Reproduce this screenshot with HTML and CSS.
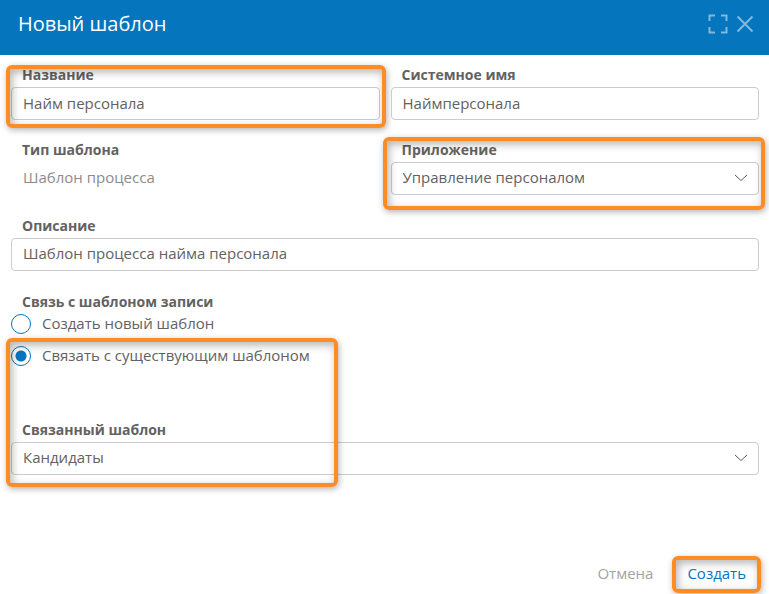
FILE: index.html
```html
<!DOCTYPE html>
<html lang="ru">
<head>
<meta charset="utf-8">
<title>Новый шаблон</title>
<link rel="stylesheet" href="styles.css">
</head>
<body>
<form class="dialog">
  <header class="dialog-header">
    <h1 class="dialog-title">Новый шаблон</h1>
    <button class="icon-button" type="button" aria-label="Развернуть">
      <svg width="20" height="20" viewBox="0 0 20 20"><path d="M1.500 7V1.500H7M13 1.500H18.500V7M18.500 13V18.500H13M7 18.500H1.500V13"/></svg>
    </button>
    <button class="icon-button" type="button" aria-label="Закрыть">
      <svg width="18" height="18" viewBox="0 0 18 18"><path d="M1.500 1.500L16.500 16.500M16.500 1.500L1.500 16.500"/></svg>
    </button>
  </header>

  <main class="dialog-body">
    <div class="field-grid">
      <div class="field">
        <label class="label" for="name">Название</label>
        <input class="control" id="name" type="text" value="Найм персонала">
        <span class="callout callout-name"></span>
      </div>
      <div class="field">
        <label class="label" for="system-name">Системное имя</label>
        <input class="control" id="system-name" type="text" value="Наймперсонала">
      </div>
      <div class="field">
        <span class="label">Тип шаблона</span>
        <span class="static-value">Шаблон процесса</span>
      </div>
      <div class="field">
        <label class="label" for="app">Приложение</label>
        <div class="select-box">
          <select class="control" id="app"><option>Управление персоналом</option></select>
          <svg class="chevron" width="14" height="8" viewBox="0 0 14 8"><path d="M1 1L7 6.500L13 1"/></svg>
        </div>
        <span class="callout callout-app"></span>
      </div>
    </div>

    <div class="field">
      <label class="label" for="description">Описание</label>
      <input class="control control-raised" id="description" type="text" value="Шаблон процесса найма персонала">
    </div>

    <div class="record-link">
      <div class="radio-group" role="radiogroup" aria-labelledby="link-label">
        <span class="label" id="link-label">Связь с шаблоном записи</span>
        <label class="radio-option"><input class="radio" type="radio" name="link">Создать новый шаблон</label>
        <label class="radio-option"><input class="radio" type="radio" name="link" checked>Связать с существующим шаблоном</label>
      </div>
      <div class="field">
        <label class="label" for="linked">Связанный шаблон</label>
        <div class="select-box">
          <select class="control" id="linked"><option>Кандидаты</option></select>
          <svg class="chevron" width="14" height="8" viewBox="0 0 14 8"><path d="M1 1L7 6.500L13 1"/></svg>
        </div>
      </div>
      <span class="callout callout-link"></span>
    </div>
  </main>

  <footer class="dialog-footer">
    <button class="action" type="button">Отмена</button>
    <div class="primary-slot">
      <button class="action action-primary" type="submit">Создать</button>
      <span class="callout callout-create"></span>
    </div>
  </footer>
</form>
</body>
</html>
```
FILE: styles.css
```css
* {
  box-sizing: border-box;
}

body {
  margin: 0;
  background: #fff;
  color: #626262;
  font: 15px/20px "Open Sans", "Noto Sans", sans-serif;
}

.dialog {
  display: flex;
  flex-direction: column;
  min-height: 100vh;
  overflow: hidden;
}

.dialog-header {
  display: flex;
  align-items: center;
  gap: 8px;
  padding: 0 15px 8px 18px;
  height: 55px;
  background: #0575bd;
  color: #fff;
}

.dialog-title {
  flex: 1;
  margin: 0;
  font-size: 20px;
  line-height: 28px;
  font-weight: 400;
}

.icon-button {
  display: flex;
  padding: 0;
  border: 0;
  background: none;
  cursor: pointer;
}

.icon-button path {
  fill: none;
  stroke: #82bade;
  stroke-width: 2;
}

.dialog-body {
  display: flex;
  flex-direction: column;
  gap: 19px;
  padding: 8px 10px 0 11px;
}

.field-grid {
  display: grid;
  grid-template-columns: 1fr 1fr;
  gap: 18px 11px;
}

.field {
  position: relative;
  display: flex;
  flex-direction: column;
}

.label {
  padding: 0 11px;
  font-size: 14px;
  line-height: 24px;
  font-weight: 700;
}

.control {
  width: 100%;
  height: 33px;
  padding: 0 11px 2px;
  border: 1px solid #ccc;
  border-radius: 4px;
  background: #fff;
  color: inherit;
  font: inherit;
  outline: none;
  appearance: none;
}

.control-raised {
  padding-bottom: 4px;
}

.static-value {
  padding: 0 12px;
  line-height: 30px;
  color: #8c8c8c;
}

.select-box {
  position: relative;
}

.select-box .control {
  display: block;
  padding-bottom: 4px;
}

.chevron {
  position: absolute;
  top: 12px;
  right: 11px;
  fill: none;
  stroke: #5c5c5c;
  pointer-events: none;
}

.record-link {
  position: relative;
  display: flex;
  flex-direction: column;
  gap: 52px;
}

.radio-group {
  display: flex;
  flex-direction: column;
}

.radio-option {
  display: flex;
  align-items: flex-start;
  gap: 11px;
  line-height: 18px;
}

.radio-option + .radio-option {
  margin-top: 12px;
}

.radio {
  width: 20px;
  height: 20px;
  margin: 0;
  border: 1px solid #0575bd;
  border-radius: 50%;
  background: #fff;
  appearance: none;
}

.radio:checked {
  background: radial-gradient(circle, #0575bd 5px, #fff 6px);
}

.dialog-footer {
  display: flex;
  justify-content: flex-end;
  align-items: center;
  gap: 4px;
  margin-top: auto;
  padding: 0 8px 1px;
}

.action {
  height: 37px;
  padding: 0 15px 4px;
  border: 0;
  background: none;
  color: #a3a3a3;
  font: inherit;
  cursor: pointer;
}

.action-primary {
  color: #0575bd;
}

.primary-slot {
  position: relative;
}

.callout {
  position: absolute;
  border: 4px solid #fd8c25;
  border-radius: 6px;
  box-shadow: 1px 2px 6px rgba(0, 0, 0, 0.3), inset 2px 3px 8px rgba(0, 0, 0, 0.3);
  pointer-events: none;
}

.callout-name {
  inset: 2px -6px -8px -5px;
}

.callout-app {
  inset: -1px -6px -15px -8px;
}

.callout-link {
  top: 48px;
  bottom: -12px;
  left: -5px;
  width: 332px;
}

.callout-create {
  inset: 0;
}
```
